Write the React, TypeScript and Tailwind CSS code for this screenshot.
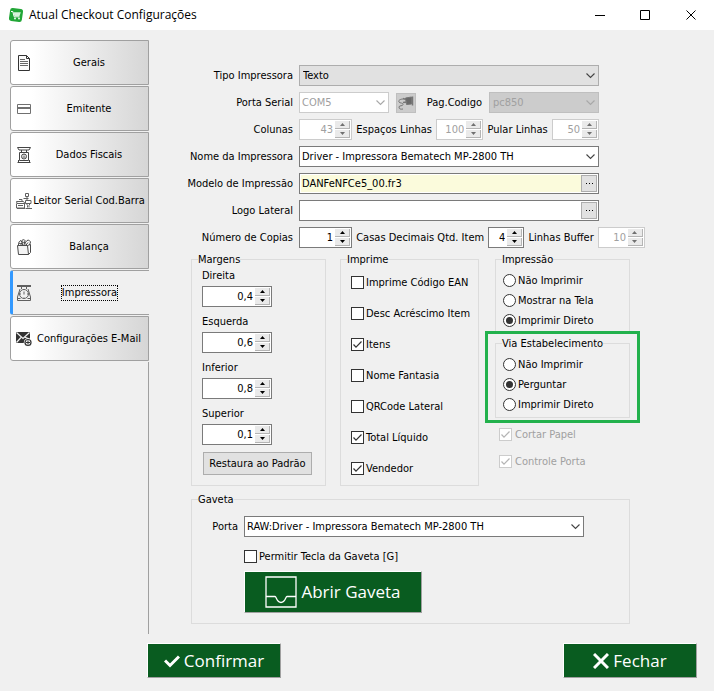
import React from 'react';
import type { ReactNode } from 'react';

interface SpinProps {
  id: string;
  value: string;
  width: string;
  disabled?: boolean;
}

interface ComboProps {
  id: string;
  value: string;
  className?: string;
  look?: 'normal' | 'flat' | 'disabled' | 'disabledFlat';
}

interface CheckProps {
  label: string;
  checked?: boolean;
  disabled?: boolean;
  className?: string;
}

interface GroupProps {
  title: string;
  className?: string;
  bodyClassName?: string;
  children: ReactNode;
}

const DocIcon = () => (
  <svg className="w-4 h-4 shrink-0" viewBox="0 0 16 16" fill="none" stroke="#333">
    <path d="M2.5.5h8l3 3v12h-11z" fill="#fafafa" />
    <path d="M10.500.5v3h3" />
    <path d="M4 4.500h5M4 6.500h8M4 8.500h8M4 10.500h8" stroke="#666" />
  </svg>
);

const CardIcon = () => (
  <svg className="w-4 h-4 shrink-0" viewBox="0 0 16 16" fill="none" stroke="#707070">
    <path d="M1.500 3.500h13v9h-13z" />
    <path d="M1 7h14" strokeWidth="2" />
  </svg>
);

const FiscalIcon = () => (
  <svg className="w-4 h-4 shrink-0" viewBox="0 0 16 16" fill="none" stroke="#444">
    <path d="M1.500.5h13M1.500.5l1.500 2.500h10l1.500-2.500M5.500 3v2.500M10.500 3v2.500" />
    <path d="M3.500 5.500h9v8h-9zM2.500 13v2.500M13.500 13v2.500M1.500 15.500h13" />
    <circle cx="8" cy="9.500" r="2.500" />
    <path d="M6.500 10h3M8 7.500v1M5 13.500h6" />
  </svg>
);

const ReaderIcon = () => (
  <svg className="w-4 h-4 shrink-0" viewBox="0 0 16 16" fill="none" stroke="#606060">
    <path d="M9.500.5h3v3h-3zM11 3.500v3.500M7.500 5.500h5M9.500 7.500h5.500v3H9.500zM10.500 10.500l1 2v2M14 10.500l-1 2v2M9.500 15.500h6.500" />
    <path d="M.5 8.500h7l1.500 2H1zM.5 10.500v4.500h8v-4.500M2 12.500h5M1 15.500h8M3 6.500h3v2" />
  </svg>
);

const BasketIcon = () => (
  <svg className="w-4 h-4 shrink-0" viewBox="0 0 16 16" fill="none" stroke="#4a4a4a">
    <path d="M1.500 6.500h10l1 9h-10z" fill="#f4f4f4" />
    <path d="M11.500 6.500l3-1v8l-2 2" />
    <path d="M2.500 6c0-3 1-4 2.500-4.500l1 2-1.500 3M6.500 6L6 1.500C7 .3 8.500.5 9 1.500L8 6M9 4l2-2.500c2-1 3 .5 3.500 1.500l-1 3M10 6l2-2.500" />
    <path d="M3 4.500h3M7 3l4 3" strokeWidth=".8" />
  </svg>
);

const ScaleIcon = () => (
  <svg className="w-4 h-4 shrink-0" viewBox="0 0 16 16" fill="none" stroke="#606060">
    <path d="M1 1h14" strokeWidth="2" />
    <path d="M5.500 2v2M10.500 2v2M4 4L1.500 12v3.500h13V12L12 4M2 13.500h2.500M11.500 13.500H14" />
    <circle cx="8" cy="9" r="4.500" fill="#f0f0f0" />
    <path d="M8 6.500V9.500M8 4v1M4 9h1M11 9h1M8 12.500v1" />
  </svg>
);

const MailIcon = () => (
  <svg className="w-4 h-4 shrink-0" viewBox="0 0 16 16">
    <path d="M0 1h14v11H0z" fill="#333" />
    <path d="M.5 1.500L7 7.500l6.500-6M.5 11.500l4.500-5M13.500 8L9 6.300" fill="none" stroke="#f2f2f2" strokeWidth="1.200" />
    <circle cx="12" cy="11.500" r="4.200" fill="#f4f4f4" />
    <circle cx="12" cy="11.500" r="3" fill="none" stroke="#333" strokeWidth="1.200" />
    <path d="M10 11.500h4M12 9.500v4" stroke="#333" />
  </svg>
);

const tabs = [
  { label: 'Gerais', icon: <DocIcon /> },
  { label: 'Emitente', icon: <CardIcon /> },
  { label: 'Dados Fiscais', icon: <FiscalIcon /> },
  { label: 'Leitor Serial Cod.Barra', icon: <ReaderIcon /> },
  { label: 'Balança', icon: <BasketIcon /> },
  { label: 'Impressora', icon: <ScaleIcon />, active: true },
  { label: 'Configurações E-Mail', icon: <MailIcon /> },
];

const margens = [
  { id: 'direita', label: 'Direita', value: '0,4' },
  { id: 'esquerda', label: 'Esquerda', value: '0,6' },
  { id: 'inferior', label: 'Inferior', value: '0,8' },
  { id: 'superior', label: 'Superior', value: '0,1' },
];

const imprime = [
  { label: 'Imprime Código EAN', checked: false },
  { label: 'Desc Acréscimo Item', checked: false },
  { label: 'Itens', checked: true },
  { label: 'Nome Fantasia', checked: false },
  { label: 'QRCode Lateral', checked: false },
  { label: 'Total Líquido', checked: true },
  { label: 'Vendedor', checked: true },
];

const comboLooks = {
  normal: 'bg-white border-[#7a7a7a] text-black pl-0.5',
  flat: 'bg-[#e1e1e1] border-[#adadad] text-black pl-[3px]',
  disabled: 'bg-white border-[#cccccc] text-[#a0a0a0] pl-0.5',
  disabledFlat: 'bg-[#cccccc] border-[#bfbfbf] text-[#a0a0a0] pl-[3px]',
};

const Combo: React.FC<ComboProps> = ({ id, value, className = '', look = 'normal' }) => {
  const disabled = look === 'disabled' || look === 'disabledFlat';
  return (
    <div className={`relative ${className}`}>
      <select
        id={id}
        disabled={disabled}
        className={`block w-full h-[21px] appearance-none border opacity-100 ${comboLooks[look]}`}
      >
        <option>{value}</option>
      </select>
      <svg
        className="absolute right-1 top-[7px] w-[9px] h-[7px] pointer-events-none"
        viewBox="0 0 9 7"
        fill="none"
        stroke={disabled ? '#a8a8a8' : '#444'}
        strokeWidth="1.100"
      >
        <path d="M.5 1.500l4 4 4-4" />
      </svg>
    </div>
  );
};

const Spin: React.FC<SpinProps> = ({ id, value, width, disabled }) => {
  const arrow = disabled ? '#707070' : '#000';
  const button = 'flex-1 flex items-center justify-center bg-[#eaeaea] border-r border-b border-[#b4b4b4]';
  return (
    <div className={`flex h-[21px] p-px bg-white border ${width} ${disabled ? 'border-[#cccccc]' : 'border-[#7a7a7a]'}`}>
      <input
        id={id}
        type="text"
        defaultValue={value}
        disabled={disabled}
        className={`flex-1 min-w-0 text-right pr-0.5 bg-transparent outline-none ${disabled ? 'text-[#a0a0a0]' : 'text-black'}`}
      />
      <div className="flex flex-col gap-px w-[15px]">
        <button type="button" aria-label="Aumentar" disabled={disabled} className={button}>
          <svg className="w-[5px] h-[3px]" viewBox="0 0 5 3" fill={arrow}><path d="M0 3L2.500 0 5 3z" /></svg>
        </button>
        <button type="button" aria-label="Diminuir" disabled={disabled} className={button}>
          <svg className="w-[5px] h-[3px]" viewBox="0 0 5 3" fill={arrow}><path d="M0 0h5L2.500 3z" /></svg>
        </button>
      </div>
    </div>
  );
};

const FileField: React.FC<{ id: string; value: string; yellow?: boolean }> = ({ id, value, yellow }) => (
  <div className="flex w-[300px] h-[21px] p-px bg-white border border-[#7a7a7a]">
    <input
      id={id}
      type="text"
      defaultValue={value}
      className={`flex-1 min-w-0 pl-px outline-none ${yellow ? 'bg-[#fbfbdc]' : 'bg-white'}`}
    />
    <button
      type="button"
      aria-label="Procurar arquivo"
      className="flex items-center justify-center w-4 bg-[#e1e1e1] border border-[#adadad]"
    >
      <svg className="w-[7px] h-px" viewBox="0 0 7 1"><path d="M0 0h1v1H0zM3 0h1v1H3zM6 0h1v1H6z" /></svg>
    </button>
  </div>
);

const Check: React.FC<CheckProps> = ({ label, checked, disabled, className = '' }) => (
  <label className={`flex items-center ${disabled ? 'gap-[3px] text-[#a0a0a0]' : 'gap-0.5'} ${className}`}>
    <span className="relative w-[13px] h-[13px] shrink-0">
      <input
        type="checkbox"
        defaultChecked={checked}
        disabled={disabled}
        className={`peer block w-[13px] h-[13px] appearance-none bg-white border ${disabled ? 'border-[#cccccc]' : 'border-[#333]'}`}
      />
      <svg
        className="absolute inset-0 hidden peer-checked:block pointer-events-none"
        viewBox="0 0 13 13"
        fill="none"
        stroke={disabled ? '#b4b4b4' : '#333'}
        strokeWidth="1.200"
      >
        <path d="M2.500 6.500L5 9.200l5.500-5.700" />
      </svg>
    </span>
    <span className="pt-px">{label}</span>
  </label>
);

const Radio: React.FC<{ name: string; label: string; checked?: boolean }> = ({ name, label, checked }) => (
  <label className="flex items-center gap-0.5 h-5">
    <span className="relative w-[13px] h-[13px] shrink-0">
      <input
        type="radio"
        name={name}
        defaultChecked={checked}
        className="peer block w-[13px] h-[13px] appearance-none rounded-full bg-white border border-[#333]"
      />
      <span className="absolute inset-[3px] hidden peer-checked:block rounded-full bg-[#333] pointer-events-none" />
    </span>
    <span className="pt-0.5">{label}</span>
  </label>
);

const Group: React.FC<GroupProps> = ({ title, className = '', bodyClassName = '', children }) => (
  <fieldset className={`border border-[#dcdcdc] ${className}`}>
    <legend className="ml-1.5 h-3.5 leading-4">{title}</legend>
    <div className={bodyClassName}>{children}</div>
  </fieldset>
);

const Row: React.FC<{ id: string; label: string; children: ReactNode }> = ({ id, label, children }) => (
  <div className="flex items-center gap-1.5 h-[21px]">
    <label htmlFor={id} className="w-36 text-right">{label}</label>
    {children}
  </div>
);

const bigButton =
  'flex items-center justify-center bg-[#095c20] text-white border border-t-white border-l-white border-r-[#a0a0a0] border-b-[#a0a0a0]';

export default function App() {
  return (
    <div className="min-h-screen bg-[#f0f0f0] text-black text-[11px] leading-[14px] font-['DejaVu_Sans_Condensed','DejaVu_Sans',sans-serif]">
      {/* Barra de título */}
      <header className="flex items-center h-[30px] bg-white pl-2">
        <svg className="w-4 h-4" viewBox="0 0 16 16">
          <rect x="1.500" y="1.500" width="13" height="13" rx="2.500" fill="#22a637" transform="rotate(8 8 8)" />
          <path d="M3 4.500h1.800L6.200 9.800h5.300" fill="none" stroke="#fff" />
          <path d="M5.500 5.300h7.300l-1.300 3.700H6.400z" fill="#d8f2dc" />
          <circle cx="7" cy="11.500" r=".9" fill="#fff" />
          <circle cx="11" cy="11.500" r=".9" fill="#fff" />
        </svg>
        <h1 className="ml-[5px] flex-1 text-[12px] leading-4 font-['Open_Sans',sans-serif]">Atual Checkout Configurações</h1>
        <button type="button" aria-label="Minimizar" className="flex items-center justify-center w-[45px] h-full">
          <svg className="w-[11px] h-[11px]" viewBox="0 0 11 11"><path d="M0 5h10v1H0z" /></svg>
        </button>
        <button type="button" aria-label="Maximizar" className="flex items-center justify-center w-[45px] h-full">
          <svg className="w-[11px] h-[11px]" viewBox="0 0 11 11" fill="none" stroke="#000"><path d="M.5.5h9v9h-9z" /></svg>
        </button>
        <button type="button" aria-label="Fechar janela" className="flex items-center justify-center w-[46px] h-full">
          <svg className="w-[11px] h-[11px]" viewBox="0 0 11 11" stroke="#000"><path d="M.5.5l9 9M9.500.5l-9 9" /></svg>
        </button>
      </header>

      <div className="flex pt-2.5 pl-2.5">
        {/* Abas laterais */}
        <nav className="flex flex-col w-[139px] shrink-0">
          {tabs.map((tab) => (
            <button
              key={tab.label}
              type="button"
              className={`flex items-center h-[45px] mb-px pr-0.5 border rounded-l-[3px] border-[#a0a0a0] ${
                tab.active
                  ? 'bg-[#f0f0f0] border-r-0 border-l-[3px] border-l-[#3399ff] pl-[3px]'
                  : 'bg-linear-to-r from-white from-15% to-[#d6d6d6] pl-[5px]'
              }`}
            >
              {tab.icon}
              <span className="flex-1 pt-px text-center whitespace-nowrap">
                <span className={tab.active ? 'inline-block outline-1 outline-dotted outline-black' : ''}>{tab.label}</span>
              </span>
            </button>
          ))}
          <div className="flex-1 border-r border-[#a0a0a0]" />
        </nav>

        <main className="flex-1 pt-[25px] pb-2.5">
          <div className="flex flex-col gap-1.5">
            <Row id="tipo" label="Tipo Impressora">
              <Combo id="tipo" value="Texto" look="flat" className="w-[300px]" />
            </Row>
            <Row id="porta-serial" label="Porta Serial">
              <div className="flex items-center gap-[7px] w-[300px]">
                <Combo id="porta-serial" value="COM5" look="disabled" className="w-[90px]" />
                <button
                  type="button"
                  aria-label="Configurar porta serial"
                  disabled
                  className="flex items-center justify-center w-5 h-5 bg-[#cccccc] border border-[#bfbfbf]"
                >
                  <svg className="w-4 h-4" viewBox="0 0 16 16" fill="none" stroke="#777">
                    <path d="M7.500 3l6-1v7l-5 .5z" fill="#6a6a6a" />
                    <path d="M14.500 1.500v9M5 3.500l3 1M5 7.500l4-.5" strokeWidth="1.500" />
                    <path d="M5.500 4C2 4 0 5.500 1 7s4 .5 4 2.500-4 .5-4 2.500 1.500 2.500 4 2" />
                  </svg>
                </button>
                <label htmlFor="pag-codigo" className="flex-1 text-right">Pag.Codigo</label>
                <Combo id="pag-codigo" value="pc850" look="disabledFlat" className="w-[110px]" />
              </div>
            </Row>
            <Row id="colunas" label="Colunas">
              <div className="flex items-center justify-between w-[300px]">
                <Spin id="colunas" value="43" width="w-[53px]" disabled />
                <label htmlFor="espacos">Espaços Linhas</label>
                <Spin id="espacos" value="100" width="w-[47px]" disabled />
                <label htmlFor="pular">Pular Linhas</label>
                <Spin id="pular" value="50" width="w-[47px]" disabled />
              </div>
            </Row>
            <Row id="nome" label="Nome da Impressora">
              <Combo id="nome" value="Driver - Impressora Bematech MP-2800 TH" className="w-[300px]" />
            </Row>
            <Row id="modelo" label="Modelo de Impressão">
              <FileField id="modelo" value="DANFeNFCe5_00.fr3" yellow />
            </Row>
            <Row id="logo" label="Logo Lateral">
              <FileField id="logo" value="" />
            </Row>
            <Row id="copias" label="Número de Copias">
              <div className="flex items-center justify-between w-[346px]">
                <Spin id="copias" value="1" width="w-[53px]" />
                <label htmlFor="decimais">Casas Decimais Qtd. Item</label>
                <Spin id="decimais" value="4" width="w-9" />
                <label htmlFor="buffer">Linhas Buffer</label>
                <Spin id="buffer" value="10" width="w-[47px]" disabled />
              </div>
            </Row>
          </div>

          <div className="flex mt-1 ml-[42px]">
            <Group title="Margens" className="w-[135px]" bodyClassName="pl-2.5 pt-px">
              {margens.map((m) => (
                <div key={m.id} className="mb-1.5">
                  <label htmlFor={m.id} className="block h-4 leading-[18px] mb-[3px]">{m.label}</label>
                  <Spin id={m.id} value={m.value} width="w-[70px]" />
                </div>
              ))}
              <button type="button" className="w-[109px] h-[23px] mt-px ml-px pt-px bg-[#e1e1e1] border border-[#adadad]">
                Restaura ao Padrão
              </button>
            </Group>

            <Group title="Imprime" className="w-[139px] ml-3.5" bodyClassName="pl-2.5 pt-px pb-px">
              {imprime.map((item) => (
                <Check key={item.label} label={item.label} checked={item.checked} className="h-[31px]" />
              ))}
            </Group>

            <div className="w-[135px] ml-4">
              <Group title="Impressão" bodyClassName="pl-[7px] pt-1 pb-[3px]">
                <Radio name="impressao" label="Não Imprimir" />
                <Radio name="impressao" label="Mostrar na Tela" />
                <Radio name="impressao" label="Imprimir Direto" checked />
              </Group>
              <div className="relative mt-0.5">
                <Group title="Via Estabelecimento" bodyClassName="pl-[7px] pt-1 pb-[3px]">
                  <Radio name="via" label="Não Imprimir" />
                  <Radio name="via" label="Perguntar" checked />
                  <Radio name="via" label="Imprimir Direto" />
                </Group>
                {/* Destaque em verde */}
                <div className="absolute -inset-x-2.5 -inset-y-[5px] border-3 border-[#22b14c] pointer-events-none" />
              </div>
              <div className="mt-[3px] pl-1">
                <Check label="Cortar Papel" checked disabled className="h-[27px]" />
                <Check label="Controle Porta" checked disabled className="h-[27px]" />
              </div>
            </div>
          </div>

          <Group title="Gaveta" className="w-[439px] mt-1.5 ml-[42px]" bodyClassName="pt-2.5 pb-2.5">
            <div className="flex items-center gap-1.5">
              <label htmlFor="porta" className="w-[46px] text-right">Porta</label>
              <Combo id="porta" value="RAW:Driver - Impressora Bematech MP-2800 TH" className="w-[340px]" />
            </div>
            <div className="ml-[52px]">
              <Check label="Permitir Tecla da Gaveta [G]" className="mt-3" />
              <button
                type="button"
                className={`${bigButton} gap-1 w-[178px] h-[42px] mt-[7px] text-[17px] leading-6 font-['Open_Sans',sans-serif]`}
              >
                <svg className="w-8 h-8" viewBox="0 0 32 32" fill="none" stroke="#fff">
                  <path d="M1 1h30v30H1zM1 20.500h9c1.500 0 1.500 6 6 6s4.500-6 6-6h9" strokeWidth="1.300" />
                </svg>
                Abrir Gaveta
              </button>
            </div>
          </Group>
        </main>
      </div>

      <footer className="flex justify-between pt-[9px] pb-3 pl-[147px] pr-[17px] text-[17px] leading-6 font-['Open_Sans',sans-serif]">
        <button type="button" className={`${bigButton} gap-1 w-[134px] h-[35px]`}>
          <svg className="w-4 h-4" viewBox="0 0 16 16" fill="none" stroke="#fff" strokeWidth="3">
            <path d="M1 7.500l5 5 9-9" />
          </svg>
          Confirmar
        </button>
        <button type="button" className={`${bigButton} gap-1 w-[134px] h-[35px]`}>
          <svg className="w-4 h-4" viewBox="0 0 16 16" fill="none" stroke="#fff" strokeWidth="3">
            <path d="M1 1l14 14M15 1L1 15" />
          </svg>
          Fechar
        </button>
      </footer>
    </div>
  );
}
